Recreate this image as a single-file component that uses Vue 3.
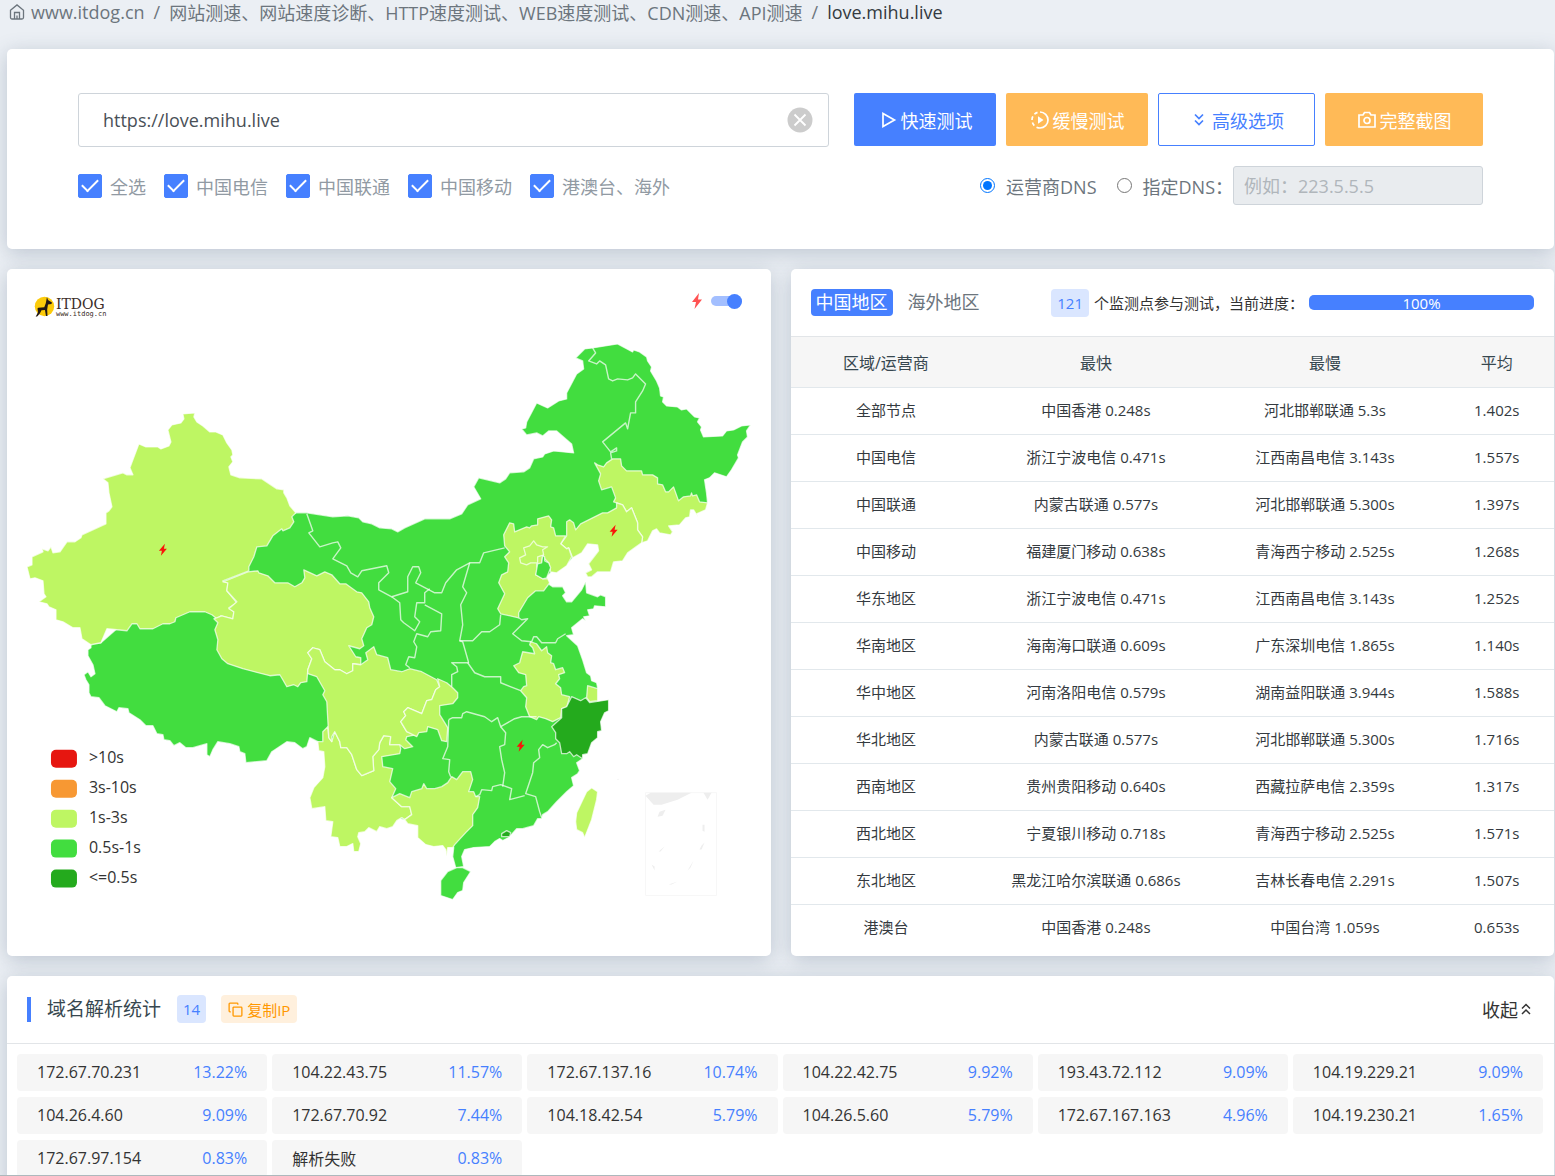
<template>
  <div class="page">
    <nav class="crumbs">
      <a href="#" class="crumb">
        <svg class="home" viewBox="0 0 16 16">
          <path d="M1.5 6.2 8 .9l6.500 5.300v7.300a1.500 1.500 0 0 1-1.500 1.500H3a1.500 1.500 0 0 1-1.500-1.500zM5.500 15V8.500h5V15M8 15v-3.500"/>
        </svg>
        <span>www.itdog.cn</span>
      </a>
      <span>/</span>
      <a href="#" class="crumb">网站测速、网站速度诊断、HTTP速度测试、WEB速度测试、CDN测速、API测速</a>
      <span>/</span>
      <span class="current">love.mihu.live</span>
    </nav>

    <section class="card form-card">
      <div class="form-row">
        <div class="url-box">
          <input
              v-model="url"
              class="url-input"
              type="text"
              aria-label="URL"
          >
          <button
              class="clear-btn"
              aria-label="清除"
              @click="url = ''"
          >
            <svg viewBox="0 0 26 26">
              <circle cx="13" cy="13" r="12.500"/>
              <path d="m7.500 7.500 11 11m0-11-11 11"/>
            </svg>
          </button>
        </div>
        <div class="buttons">
          <button class="btn blue">
            <svg class="ico" viewBox="0 0 20 20"><path d="M5 3.500v13L16.500 10z"/></svg>
            快速测试
          </button>
          <button class="btn orange">
            <svg class="ico" viewBox="0 0 20 20">
              <path d="M10 2a8 8 0 0 1 0 16"/>
              <path d="M10 18A8 8 0 0 1 10 2" stroke-dasharray="3.600 2.680"/>
              <path class="solid" d="M8 6.200v7.600l5.500-3.800z"/>
            </svg>
            缓慢测试
          </button>
          <button class="btn outline">
            <svg class="ico" viewBox="0 0 20 20"><path d="m6 4.500 4 4 4-4M6 10.500l4 4 4-4"/></svg>
            高级选项
          </button>
          <button class="btn orange wide">
            <svg class="ico" viewBox="0 0 20 20">
              <path d="M2 5h4l1.500-2.500h5L14 5h4v12H2z"/>
              <circle cx="10" cy="10.500" r="3"/>
            </svg>
            完整截图
          </button>
        </div>
      </div>
      <div class="form-row options">
        <div class="checks">
          <label
              v-for="line in lines"
              :key="line.name"
              class="check"
          >
            <input
                v-model="line.on"
                type="checkbox"
            >
            <span>{{ line.name }}</span>
          </label>
        </div>
        <div class="dns">
          <label class="radio">
            <input
                v-model="dns"
                type="radio"
                name="dns"
                value="isp"
            >
            <span>运营商DNS</span>
          </label>
          <label class="radio">
            <input
                v-model="dns"
                type="radio"
                name="dns"
                value="custom"
            >
            <span>指定DNS：</span>
          </label>
          <input
              class="dns-input"
              type="text"
              placeholder="例如：223.5.5.5"
              aria-label="DNS"
              :disabled="dns === 'isp'"
          >
        </div>
      </div>
    </section>

    <div class="columns">
      <section class="card map-card">
        <label class="map-switch">
          <svg class="bolt" viewBox="0 0 10 16"><path d="M7 0 0 9h4l-1.500 7L10 6.500H6z"/></svg>
          <input
              v-model="showBolts"
              type="checkbox"
              aria-label="闪电"
          >
        </label>
        <svg class="map" viewBox="7 269 764 687">
          <!-- logo -->
          <circle cx="44.500" cy="306.500" r="9.700" fill="#fccb0b"/>
          <path
              fill="#221815"
              d="m47 297 1 3 4 2.500-.5 1.500-3.500.5-.8 5 .3 6.500h-1.500l-1-6-3.500.2-1.500 3-2.500 3-1.800.5 2.300-4.500-.5-3.700.8-.8 6-.5 1.500-4z"
          />
          <text class="logo-name" x="56" y="309">ITDOG</text>
          <text class="logo-url" x="56" y="316">www.itdog.cn</text>

          <path
              v-for="(area, i) in areas"
              :key="i"
              class="area"
              :fill="area.fill"
              :d="area.d"
          />
          <path
              v-for="(line, i) in borders"
              :key="'b' + i"
              class="border-line"
              :d="line"
          />

          <!-- south sea inset -->
          <g class="inset">
            <path class="frame" d="M646 793h71v103h-71z"/>
            <path d="m646 796 5-3h41l-14 7-16 5h-8zM704 793h8l-4 7zM660 812l6-2-3 6-5 1zM703 825h2v7l-2-1zM659 852l6-5-4 5zM702 846l3-3-3 7h-2zM652 865l3 2v4zM694 861l-6 10 3-3zM669 885l9-3-6 3zM717 799l-5 6zM709 813l-4 4zM659 828l1 4zM617 780l2-1v1z"/>
          </g>

          <template v-if="showBolts">
            <path
                v-for="b in bolts"
                :key="b.x"
                class="map-bolt"
                d="M2-6-4 1h3l-1 5L4-1H1z"
                :transform="`translate(${b.x} ${b.y})`"
            />
          </template>

          <g
              v-for="(item, i) in legend"
              :key="item.label"
          >
            <rect
                x="51"
                :y="750 + i * 30"
                width="26"
                height="18"
                rx="5"
                :fill="item.fill"
            />
            <text
                class="legend-text"
                x="89"
                :y="763 + i * 30"
            >{{ item.label }}</text>
          </g>
        </svg>
      </section>

      <section class="card">
        <div class="card-head">
          <div class="tabs">
            <button class="tab active">中国地区</button>
            <button class="tab">海外地区</button>
          </div>
          <div class="progress-info">
            <span class="badge">121</span>
            <span class="progress-text">个监测点参与测试，当前进度：</span>
            <div class="progress">
              <div
                  class="progress-bar"
                  :style="{ width: progress + '%' }"
              >
                {{ progress }}%
              </div>
            </div>
          </div>
        </div>
        <table class="stats">
          <thead>
            <tr>
              <th>区域/运营商</th>
              <th>最快</th>
              <th>最慢</th>
              <th>平均</th>
            </tr>
          </thead>
          <tbody>
            <tr
                v-for="row in rows"
                :key="row[0]"
            >
              <td
                  v-for="cell in row"
                  :key="cell"
              >{{ cell }}</td>
            </tr>
          </tbody>
        </table>
      </section>
    </div>

    <section class="card ip-card">
      <div class="card-head">
        <div class="ip-title">
          <h2>域名解析统计</h2>
          <span class="badge">14</span>
          <button class="copy-btn">
            <svg class="copy" viewBox="0 0 16 16">
              <path d="M6 5.500h8a.8.8 0 0 1 .8.8v7.900a.8.8 0 0 1-.8.800H6.200a.8.8 0 0 1-.8-.800V6zM3 10.500H2a.8.8 0 0 1-.8-.8V2a.8.8 0 0 1 .8-.8h7.700a.8.8 0 0 1 .8.800v1"/>
            </svg>
            复制IP
          </button>
        </div>
        <button class="fold-btn">
          收起
          <svg viewBox="0 0 12 14"><path d="m2 6.500 4-4 4 4M2 12l4-4 4 4"/></svg>
        </button>
      </div>
      <div class="ip-grid">
        <div
            v-for="ip in ips"
            :key="ip[0]"
            class="ip-item"
        >
          <span>{{ ip[0] }}</span>
          <span class="rate">{{ ip[1] }}</span>
        </div>
      </div>
    </section>
  </div>
</template>

<script setup>
import { ref } from 'vue'

const url = ref('https://love.mihu.live')
const dns = ref('isp')
const showBolts = ref(true)
const progress = ref(100)

const lines = ref([
  { name: '全选', on: true },
  { name: '中国电信', on: true },
  { name: '中国联通', on: true },
  { name: '中国移动', on: true },
  { name: '港澳台、海外', on: true }
])

const rows = [
  ['全部节点', '中国香港 0.248s', '河北邯郸联通 5.3s', '1.402s'],
  ['中国电信', '浙江宁波电信 0.471s', '江西南昌电信 3.143s', '1.557s'],
  ['中国联通', '内蒙古联通 0.577s', '河北邯郸联通 5.300s', '1.397s'],
  ['中国移动', '福建厦门移动 0.638s', '青海西宁移动 2.525s', '1.268s'],
  ['华东地区', '浙江宁波电信 0.471s', '江西南昌电信 3.143s', '1.252s'],
  ['华南地区', '海南海口联通 0.609s', '广东深圳电信 1.865s', '1.140s'],
  ['华中地区', '河南洛阳电信 0.579s', '湖南益阳联通 3.944s', '1.588s'],
  ['华北地区', '内蒙古联通 0.577s', '河北邯郸联通 5.300s', '1.716s'],
  ['西南地区', '贵州贵阳移动 0.640s', '西藏拉萨电信 2.359s', '1.317s'],
  ['西北地区', '宁夏银川移动 0.718s', '青海西宁移动 2.525s', '1.571s'],
  ['东北地区', '黑龙江哈尔滨联通 0.686s', '吉林长春电信 2.291s', '1.507s'],
  ['港澳台', '中国香港 0.248s', '中国台湾 1.059s', '0.653s']
]

const ips = [
  ['172.67.70.231', '13.22%'],
  ['104.22.43.75', '11.57%'],
  ['172.67.137.16', '10.74%'],
  ['104.22.42.75', '9.92%'],
  ['193.43.72.112', '9.09%'],
  ['104.19.229.21', '9.09%'],
  ['104.26.4.60', '9.09%'],
  ['172.67.70.92', '7.44%'],
  ['104.18.42.54', '5.79%'],
  ['104.26.5.60', '5.79%'],
  ['172.67.167.163', '4.96%'],
  ['104.19.230.21', '1.65%'],
  ['172.67.97.154', '0.83%'],
  ['解析失败', '0.83%']
]

const DARK = '#24aa1d'
const GREEN = '#42dd3f'
const LIME = '#bef663'

const legend = [
  { label: '>10s', fill: '#e61610' },
  { label: '3s-10s', fill: '#f79833' },
  { label: '1s-3s', fill: LIME },
  { label: '0.5s-1s', fill: GREEN },
  { label: '<=0.5s', fill: DARK }
]

const bolts = [
  { x: 163, y: 550 },
  { x: 614, y: 531 },
  { x: 521, y: 746 }
]

const areas = [
  // mainland
  {
    fill: GREEN,
    d: 'M296 513 307 513 333 517 348 516 359 518 363 522 372 524 380 528 392 529 398 532 405 528 425 519 450 519 462 514 468 505 481 499 474 487 479 478 500 483 506 479 510 473 524 472 530 468 534 459 543 457 545 454 554 451 574 453 572 444 557 431 549 431 543 436 537 433 527 435 522 429 526 428 527 422 537 403 548 408 559 401 567 399 567 393 577 374 584 369 583 361 576 358 585 349 593 348 618 344 633 352 634 350 640 352 647 357 648 361 652 367 651 371 657 381 660 388 661 396 664 397 663 402 667 406 678 407 682 410 687 409 695 417 700 418 698 422 702 427 701 430 704 437 723 436 727 431 734 430 742 426 751 425 747 431 748 437 743 442 738 455 739 458 732 470 727 477 715 473 710 478 705 480 707 493 708 503 706 510 697 514 694 510 691 510 690 517 686 518 680 525 669 526 673 532 671 535 660 533 657 529 653 531 648 541 642 543 628 553 623 561 614 562 611 572 598 572 592 577 588 577 586 573 592 570 589 564 599 551 598 545 588 544 582 553 573 558 568 564 557 573 552 572 547 577 550 585 553 587 563 587 566 593 563 596 567 602 572 602 577 596 582 590 586 582 587 593 598 597 601 595 606 597 606 607 595 606 594 609 588 610 590 616 584 617 586 621 583 619 572 628 574 635 567 636 578 646 583 660 587 673 591 676 592 681 597 683 598 688 598 701 590 750 583 755 583 759 577 763 580 771 578 774 572 778 574 786 567 792 557 802 548 812 543 815 542 819 538 819 534 826 523 829 517 829 509 838 503 841 500 839 495 842 490 847 474 848 465 850 462 857 464 867 456 868 453 857 454 848 420 825 340 800 330 760 318 742 310 738 307 747 303 749 295 743 287 742 272 752 267 761 246 763 245 754 240 752 239 747 230 744 218 742 213 750 210 757 207 755 207 744 193 748 186 748 180 743 174 746 170 741 164 740 163 735 157 734 153 726 146 726 140 720 129 713 128 709 119 708 117 712 105 706 99 698 91 697 89 693 89 685 86 680 84 675 88 672 91 677 95 674 93 665 88 656 88 650 91 648 91 644 101 643 150 600 270 525z'
  },
  // Xinjiang
  {
    fill: LIME,
    d: 'M183 414 195 413 194 417 197 422 203 426 210 432 216 432 223 435 227 443 232 450 233 455 231 457 233 462 229 467 231 475 240 478 262 479 277 489 284 490 284 493 287 498 290 506 296 513 292 517 294 522 290 528 283 531 282 529 273 536 267 546 257 547 254 557 249 567 249 571 223 581 228 583 227 591 237 603 229 608 234 612 233 619 221 616 217 619 212 615 205 612 190 612 176 618 175 622 170 624 163 624 153 629 140 629 137 624 132 624 127 631 107 629 101 643 91 645 82 639 80 628 73 628 63 622 56 620 56 610 49 607 47 604 39 602 46 597 44 594 43 581 35 578 30 579 27 567 32 565 32 557 43 552 42 549 48 551 51 547 53 553 60 552 67 542 75 542 81 538 82 535 106 524 106 513 109 511 112 507 109 493 108 483 103 479 123 473 127 475 133 475 130 468 139 444 146 447 158 447 161 449 169 446 171 442 168 430 172 425 181 423 184 419z'
  },
  // Qinghai
  {
    fill: LIME,
    d: 'M223 582 248 572 258 571 259 573 268 576 275 583 288 583 295 587 302 583 305 578 304 570 317 576 325 572 332 575 340 584 346 584 357 592 362 593 369 602 370 608 374 617 372 625 367 628 362 639 364 646 360 649 349 646 356 657 361 658 361 665 353 664 353 671 347 674 340 670 335 670 325 662 320 650 313 648 308 653 312 659 308 670 307 682 301 683 298 687 294 685 287 687 283 680 280 675 270 676 243 669 228 664 222 659 217 650 218 640 215 630 218 623 214 619 222 616 233 619 234 612 229 609 237 602 227 591 228 583z'
  },
  // Yunnan
  {
    fill: LIME,
    d: 'M328 727 323 732 323 742 318 742 319 751 324 752 325 767 323 778 314 788 310 798 312 809 325 807 326 821 333 822 331 837 338 838 340 847 347 847 353 844 354 852 359 852 361 844 358 837 359 833 365 832 369 828 377 832 380 827 387 829 393 827 397 821 402 818 405 820 412 815 410 807 402 807 392 798 396 789 390 782 393 769 383 767 382 757 400 754 401 749 400 745 390 745 391 737 384 736 380 743 379 750 373 757 374 771 362 776 357 770 352 755 347 748 341 748 340 742 335 732 332 742 329 738z'
  },
  // Sichuan
  {
    fill: LIME,
    d: 'M308 670 312 659 308 653 313 648 320 650 325 662 335 670 340 670 347 674 353 671 353 664 361 665 368 660 366 653 374 647 377 655 388 658 391 670 402 672 410 669 422 672 437 680 440 687 436 690 432 700 427 701 422 714 408 708 404 712 406 716 401 722 407 732 417 735 407 737 406 740 413 747 405 749 400 745 390 745 391 737 384 736 380 743 379 750 373 757 374 771 362 776 357 770 352 755 347 748 341 748 340 742 335 732 332 737 332 742 329 738 327 702 323 695 325 691 317 677 308 674z'
  },
  // Chongqing
  {
    fill: LIME,
    d: 'M438 679 447 683 453 688 458 693 458 698 453 704 440 706 440 715 445 723 448 728 447 742 442 741 438 730 428 727 427 732 419 733 417 737 407 732 401 722 406 716 404 712 408 708 422 714 427 701 432 700 436 690 440 687z'
  },
  // Guangxi
  {
    fill: LIME,
    d: 'M392 798 400 794 410 798 412 792 422 789 424 784 427 789 435 789 442 787 448 783 452 777 457 780 463 772 471 772 473 780 469 792 474 792 476 797 480 797 478 808 473 815 473 826 466 833 455 845 453 848 448 848 447 857 446 850 443 846 434 847 426 845 418 838 418 826 408 824 405 820 412 815 410 807 402 807z'
  },
  // Jilin
  {
    fill: LIME,
    d: 'M595 463 598 465 604 467 607 463 613 459 621 459 622 466 627 471 642 471 643 475 653 475 658 478 658 484 663 485 666 492 669 492 674 487 679 501 684 497 691 496 692 493 693 496 697 495 700 502 708 503 706 510 697 514 699 518 694 510 691 510 690 517 686 518 680 525 669 526 673 532 671 535 660 533 657 529 653 531 648 541 642 543 643 537 638 530 638 523 632 508 627 512 623 505 614 502 616 498 612 487 602 490 599 481 601 474z'
  },
  // Liaoning
  {
    fill: LIME,
    d: 'M561 544 567 536 567 522 570 520 574 523 576 530 581 524 595 517 603 513 608 513 617 508 617 503 623 505 627 512 632 508 638 523 638 530 643 537 642 543 628 553 623 561 614 562 611 572 598 572 592 577 588 577 586 573 592 570 589 564 599 551 598 545 588 544 582 553 573 558 569 548 567 549z'
  },
  // Hebei
  {
    fill: LIME,
    d: 'M504 535 510 523 514 524 515 532 527 527 530 528 532 526 538 525 538 519 549 516 552 520 551 527 554 528 556 536 566 536 561 544 567 549 569 548 572 557 567 566 557 573 551 572 549 563 545 559 543 555 542 565 537 564 538 571 536 575 543 579 548 579 550 583 544 591 536 591 528 598 519 613 519 618 501 614 498 609 505 594 499 583 502 575 508 572 509 563 505 557 510 552 505 546z'
  },
  // Beijing
  {
    fill: LIME,
    d: 'M520 558 526 555 524 548 530 546 534 541 537 545 543 547 548 547 543 550 544 555 538 557 538 563 531 563 527 565 521 563z'
  },
  // Tianjin
  {
    fill: GREEN,
    d: 'M543 556 545 557 545 561 549 563 551 568 547 578 543 579 536 575 538 564 542 563z'
  },
  // Anhui
  {
    fill: LIME,
    d: 'M531 642 537 644 542 651 547 647 548 653 552 656 551 663 554 664 556 670 563 668 565 673 559 675 560 679 556 684 561 688 562 695 570 697 567 708 562 709 561 718 553 722 546 719 539 717 537 720 530 717 526 707 527 698 521 691 524 687 527 686 526 675 519 673 514 666 520 663 523 652 535 654 533 648 530 645z'
  },
  // Shanghai
  {
    fill: LIME,
    d: 'M588 686 598 689 598 701 590 702 587 698z'
  },
  // Zhejiang
  {
    fill: DARK,
    d: 'M572 697 581 701 586 698 590 703 609 700 609 711 605 713 601 722 602 731 598 732 598 738 592 743 588 754 583 755 583 759 577 755 574 757 570 752 567 754 562 754 560 743 556 739 556 733 552 727 562 718 562 709 567 707z'
  },
  // Taiwan
  {
    fill: LIME,
    d: 'M592 788 598 792 597 800 592 820 585 838 583 833 577 830 576 822 577 813 587 792z'
  },
  // Hainan
  {
    fill: GREEN,
    d: 'M463 868 471 872 464 883 463 891 458 893 453 900 441 896 441 881 448 872 457 868z'
  },
  // Hong Kong
  {
    fill: DARK,
    d: 'M502 834 507 831 511 833 510 837 502 837z'
  }
]

const borders = [
  'M593 348 596 353 589 361 597 364 600 361 606 365 609 379 613 381 618 379 628 380 633 378 636 374 646 384 643 391 636 402 636 413 631 413 628 429 626 423 603 442 611 452 617 448 617 451 611 453 612 459',
  'M307 514 313 531 309 533 320 547 333 543 338 542 341 548 333 559 347 566 351 573 358 577 362 571 372 569 387 566 389 573 379 583 379 590 392 597 408 592 408 577 413 567 419 567 421 573 416 583 435 593 442 593 446 583 457 570 470 563 480 563 484 553 505 548',
  'M392 597 400 603 401 620 404 623 415 631 420 622 415 617 417 603 425 603 425 593 430 589',
  'M425 605 442 614 441 631 431 632 428 637 417 634 414 642 417 647 415 658 409 657 406 665 410 668',
  'M470 563 463 587 467 593 461 605 463 625 460 641 463 642 469 663',
  'M460 641 473 641 482 632 490 632 500 625 501 615',
  'M469 663 452 663 457 667 458 672 452 675 452 687',
  'M468 663 475 673 485 677 501 677 501 683 521 691',
  'M519 618 522 620 528 619 513 634 522 641 532 642 534 637 537 637 542 643 556 643 558 639 566 634',
  'M449 720 453 718 462 718 463 714 467 712 485 717 492 722 498 718 501 727 515 719 522 717 537 717',
  'M449 720 448 747 443 759 450 760 449 772 451 777',
  'M501 727 506 733 505 745 500 747 502 760 505 773 503 787',
  'M476 797 480 795 482 790 492 791 493 787 501 785 512 789 510 800 525 796',
  'M557 743 555 745 548 748 543 745 539 750 540 758 534 763 533 773 528 788 526 794 536 797 540 812 542 818'
]
</script>

<style>
body {
  margin: 0;
  background: #ebeff4;
}
</style>

<style scoped>
* {
  box-sizing: border-box;
}
.page {
  height: 100vh;
  overflow: hidden;
  padding: 0 1px 0 7px;
  border-bottom: 1px solid #adb8bc;
  font-family: "Open Sans", "Noto Sans CJK SC", sans-serif;
  font-size: 18px;
  font-weight: 400;
  color: #37474f;
}
button,
input {
  font: inherit;
}
button {
  border: none;
  background: none;
  padding: 0;
  cursor: pointer;
}
svg {
  display: block;
}
a {
  color: inherit;
  text-decoration: none;
}
.crumbs {
  display: flex;
  align-items: center;
  gap: 9px;
  height: 49px;
  padding: 0 2px 26px;
  color: #6c757d;
  white-space: nowrap;
}
.crumb {
  display: flex;
  align-items: center;
  gap: 6px;
}
.home {
  width: 16px;
  height: 16px;
  fill: none;
  stroke: #6c757d;
  stroke-width: 1.3;
}
.current {
  color: #343a40;
}
.card {
  position: relative;
  background: #fff;
  border-radius: 5px;
  box-shadow: 0 4px 20px rgba(69, 90, 120, .28);
}
.form-card {
  height: 200px;
  padding: 44px 71px;
}
.form-row {
  display: flex;
  align-items: flex-start;
  gap: 25px;
}
.url-box {
  position: relative;
  flex: 1;
}
.url-input {
  width: 100%;
  height: 54px;
  padding: 0 56px 0 24px;
  border: 1px solid #ced4da;
  border-radius: 3px;
  color: #495057;
  outline: none;
}
.clear-btn {
  position: absolute;
  top: 14px;
  right: 16px;
  width: 26px;
  height: 26px;
}
.clear-btn circle {
  fill: #ccc;
}
.clear-btn path {
  stroke: #fff;
  stroke-width: 1.8;
}
.buttons {
  display: flex;
  gap: 10px;
}
.btn {
  display: flex;
  align-items: center;
  justify-content: center;
  gap: 3px;
  width: 142px;
  height: 53px;
  border-radius: 2px;
  color: #fff;
}
.btn.blue {
  background: #4680ff;
}
.btn.orange {
  background: #ffba57;
}
.btn.outline {
  width: 157px;
  border: 1px solid #4680ff;
  color: #4680ff;
}
.btn.wide {
  width: 158px;
}
.ico {
  width: 20px;
  height: 20px;
  fill: none;
  stroke: currentColor;
  stroke-width: 1.7;
}
.ico .solid {
  fill: currentColor;
  stroke: none;
}
.options {
  align-items: center;
  justify-content: space-between;
  height: 39px;
  margin-top: 19px;
  white-space: nowrap;
}
.checks {
  display: flex;
  gap: 18px;
  color: #919aa3;
}
.check {
  display: flex;
  align-items: center;
  gap: 8px;
}
.check input {
  appearance: none;
  display: flex;
  align-items: center;
  justify-content: center;
  width: 24px;
  height: 24px;
  margin: 0;
  border: 1px solid #4680ff;
  border-radius: 2px;
}
.check input:checked {
  background: #4680ff;
}
.check input:checked::after {
  content: "";
  width: 14px;
  height: 7px;
  margin-bottom: 4px;
  border-left: 2px solid #fff;
  border-bottom: 2px solid #fff;
  transform: rotate(-45deg);
}
.dns {
  display: flex;
  align-items: center;
  color: #6c757d;
}
.radio {
  display: flex;
  align-items: center;
  gap: 11px;
  margin-right: 20px;
}
.radio + .radio {
  margin-right: 0;
}
.radio input {
  width: 15px;
  height: 15px;
  margin: 0;
}
.dns-input {
  width: 250px;
  height: 39px;
  padding: 0 10px;
  border: 1px solid #ced4da;
  border-radius: 3px;
  background: #e9ecef;
}
.dns-input::placeholder {
  color: #b0b6bb;
}
.columns {
  display: grid;
  grid-template-columns: 1fr 1fr;
  gap: 20px;
  margin: 20px 0;
}
.map {
  width: 100%;
  height: auto;
}
.area {
  stroke: rgba(255, 255, 255, .7);
  stroke-width: 1.3;
  stroke-linejoin: round;
}
.border-line {
  fill: none;
  stroke: rgba(255, 255, 255, .7);
  stroke-width: 1.4;
  stroke-linejoin: round;
}
.inset {
  fill: #eee;
}
.inset .frame {
  fill: none;
  stroke: #f7f7f7;
}
.map-bolt {
  fill: #f8150a;
}
.logo-name {
  font-family: "DejaVu Serif", serif;
  font-size: 14px;
  fill: #3a2c28;
}
.logo-url {
  font-family: "DejaVu Sans Mono", monospace;
  font-size: 7px;
  fill: #3a2c28;
}
.legend-text {
  font-size: 16px;
  fill: #333;
}
.map-switch {
  position: absolute;
  top: 24px;
  right: 29px;
  display: flex;
  align-items: center;
  gap: 9px;
}
.bolt {
  width: 10px;
  height: 16px;
  fill: #ff5252;
}
.map-switch input {
  appearance: none;
  display: flex;
  align-items: center;
  width: 31px;
  height: 10px;
  margin: 0;
  border-radius: 5px;
  background: #ccc;
}
.map-switch input::after {
  content: "";
  width: 15px;
  height: 15px;
  border-radius: 50%;
  background: #fff;
}
.map-switch input:checked {
  justify-content: flex-end;
  background: #a3bfff;
}
.map-switch input:checked::after {
  background: #4680ff;
}
.card-head {
  display: flex;
  align-items: center;
  justify-content: space-between;
  height: 68px;
  padding: 0 20px;
  border-bottom: 1px solid #e2e5e8;
  white-space: nowrap;
}
.tabs {
  display: flex;
  gap: 10px;
}
.tab {
  height: 27px;
  padding: 0 5px;
  border-radius: 4px;
  line-height: 27px;
  color: #6c757d;
}
.tab.active {
  background: #4680ff;
  color: #fff;
}
.progress-info {
  display: flex;
  align-items: center;
  gap: 5px;
  font-size: 15px;
  color: #333;
}
.badge {
  height: 28px;
  padding: 0 6px;
  border-radius: 4px;
  background: #dae6ff;
  color: #4680ff;
  font-size: 15px;
  line-height: 28px;
}
.progress {
  width: 225px;
  height: 15px;
  border-radius: 5px;
  background: #e9ecef;
}
.progress-bar {
  display: flex;
  align-items: center;
  justify-content: center;
  height: 15px;
  border-radius: 5px;
  background: #4680ff;
  color: #fff;
}
.stats {
  width: 100%;
  border-collapse: collapse;
  table-layout: fixed;
  font-size: 15px;
  text-align: center;
  white-space: nowrap;
}
.stats th {
  width: 30%;
  height: 50px;
  padding: 0;
  background: #f6f6f6;
  font-size: 16px;
  font-weight: 400;
}
.stats th:first-child {
  width: 25%;
}
.stats th:last-child {
  width: 15%;
}
.stats td {
  height: 47px;
  padding: 0 0 2px;
  border-top: 1px solid #e2e8ec;
  color: #343a40;
}
.ip-title {
  display: flex;
  align-items: center;
}
.ip-title h2 {
  margin: 0 16px 0 0;
  padding-left: 16px;
  border-left: 4px solid #4680ff;
  font-size: 19px;
  font-weight: 400;
  line-height: 25px;
}
.copy-btn {
  display: flex;
  align-items: center;
  gap: 4px;
  height: 28px;
  margin-left: 15px;
  padding: 0 7px;
  border-radius: 4px;
  background: #fff0dd;
  color: #ff9800;
  font-size: 15px;
}
.copy {
  width: 15px;
  height: 15px;
  fill: none;
  stroke: currentColor;
  stroke-width: 1.4;
}
.fold-btn {
  display: flex;
  align-items: center;
  gap: 2px;
  margin-right: 2px;
  color: #333;
}
.fold-btn svg {
  width: 12px;
  height: 14px;
  fill: none;
  stroke: currentColor;
  stroke-width: 1.5;
}
.ip-grid {
  display: grid;
  grid-template-columns: repeat(6, 1fr);
  gap: 6px 5px;
  padding: 10px 11px 10px 10px;
}
.ip-item {
  display: flex;
  align-items: center;
  justify-content: space-between;
  height: 37px;
  padding: 0 20px;
  border-radius: 4px;
  background: #f6f6f6;
  color: #333;
  font-size: 16px;
}
.rate {
  color: #4680ff;
}
</style>
